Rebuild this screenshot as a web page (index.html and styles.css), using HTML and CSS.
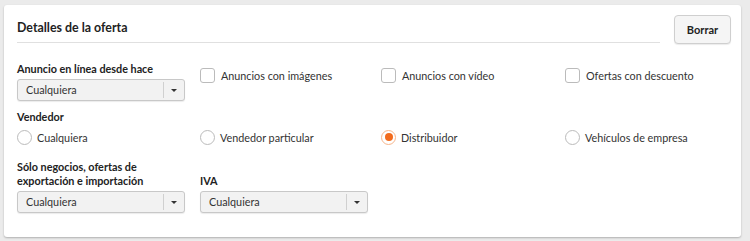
FILE: index.html
```html
<html>

<head>
    <meta charset="utf-8">
    <title>Detalles de la oferta</title>
    <link rel="stylesheet" href="styles.css">
</head>

<body>
    <div class="card">
        <div class="header">
            <div class="title">Detalles de la oferta</div>
            <button class="clearButton">Borrar</button>
        </div>

        <!-- first row: age select and checkboxes -->
        <div class="row">
            <div class="field">
                <div class="fieldLabel">Anuncio en línea desde hace</div>
                <div class="select"><span class="value">Cualquiera</span><span class="arrow"></span></div>
            </div>
            <label class="option"><span class="check"></span>Anuncios con imágenes</label>
            <label class="option"><span class="check"></span>Anuncios con vídeo</label>
            <label class="option"><span class="check"></span>Ofertas con descuento</label>
        </div>

        <!-- seller radios -->
        <div class="group">
            <div class="fieldLabel">Vendedor</div>
            <div class="row radios">
                <label class="option"><span class="radio"></span>Cualquiera</label>
                <label class="option"><span class="radio"></span>Vendedor particular</label>
                <label class="option"><span class="radio checked"></span>Distribuidor</label>
                <label class="option"><span class="radio"></span>Vehículos de empresa</label>
            </div>
        </div>

        <!-- last row -->
        <div class="row bottomRow">
            <div class="field">
                <div class="fieldLabel">Sólo negocios, ofertas de<br>exportación e importación</div>
                <div class="select"><span class="value">Cualquiera</span><span class="arrow"></span></div>
            </div>
            <div class="field">
                <div class="fieldLabel">IVA</div>
                <div class="select"><span class="value">Cualquiera</span><span class="arrow"></span></div>
            </div>
        </div>
    </div>
</body>

</html>
```
FILE: styles.css
```css
body {
    margin: 0;
    padding: 5px 9px 4px 4px;
    background: #ebebeb;
    font-family: Lato, "Open Sans", sans-serif;
    font-size: 10.8px;
    color: #333;
}

.card {
    background: #fff;
    border-radius: 3px;
    box-shadow: 0 1px 2px rgba(0, 0, 0, 0.25);
    padding: 10px 10px 24px 13px;
    height: 198px;
}

.header {
    display: flex;
    align-items: flex-start;
}

.title {
    flex: 1;
    font-size: 12.4px;
    font-weight: bold;
    color: #222;
    padding-top: 5px;
    height: 22px;
    border-bottom: 1px solid #e0e0e0;
    margin-right: 14px;
}

.clearButton {
    width: 57px;
    height: 29px;
    margin-top: 0;
    background: #f5f5f5;
    border: 1px solid #cfcfcf;
    border-radius: 4px;
    box-shadow: 0 1px 1px rgba(0, 0, 0, 0.08);
    font-family: Lato, sans-serif;
    font-size: 11px;
    font-weight: bold;
    color: #222;
}

.row {
    display: grid;
    grid-template-columns: 183px 181px 184px 1fr;
    margin-top: 18px;
}

.fieldLabel {
    font-weight: bold;
    color: #222;
    line-height: 14px;
}

.select {
    display: flex;
    width: 166px;
    height: 20px;
    margin-top: 3px;
    border: 1px solid #c8c8c8;
    border-radius: 3px;
    background: #f2f2f2;
    box-shadow: 0 1px 1px rgba(0, 0, 0, 0.08);
    align-items: center;
}

.value {
    flex: 1;
    padding-left: 8px;
    border-right: 1px solid #d0d0d0;
    line-height: 16px;
}

.arrow {
    width: 20px;
    display: flex;
    justify-content: center;
}

.arrow::after {
    content: "";
    border-left: 3px solid transparent;
    border-right: 3px solid transparent;
    border-top: 3px solid #333;
}

.option {
    display: flex;
    align-items: center;
    height: 16px;
    margin-top: 5px;
}

.check {
    width: 13px;
    height: 13px;
    border: 1px solid #bbb;
    border-radius: 3px;
    margin-right: 6px;
}

.group {
    margin-top: 9px;
}

.radios {
    margin-top: 5px;
}

.radios .option {
    margin-top: 0;
}

.radio {
    width: 15px;
    height: 15px;
    border: 1px solid #bbb;
    border-radius: 50%;
    margin-right: 5px;
    box-sizing: border-box;
    display: flex;
    align-items: center;
    justify-content: center;
}

.radio.checked {
    border-color: #f7b58a;
}

.radio.checked::after {
    content: "";
    width: 8px;
    height: 8px;
    border-radius: 50%;
    background: #f26b1d;
}

.bottomRow {
    margin-top: 15px;
    align-items: end;
}
```
